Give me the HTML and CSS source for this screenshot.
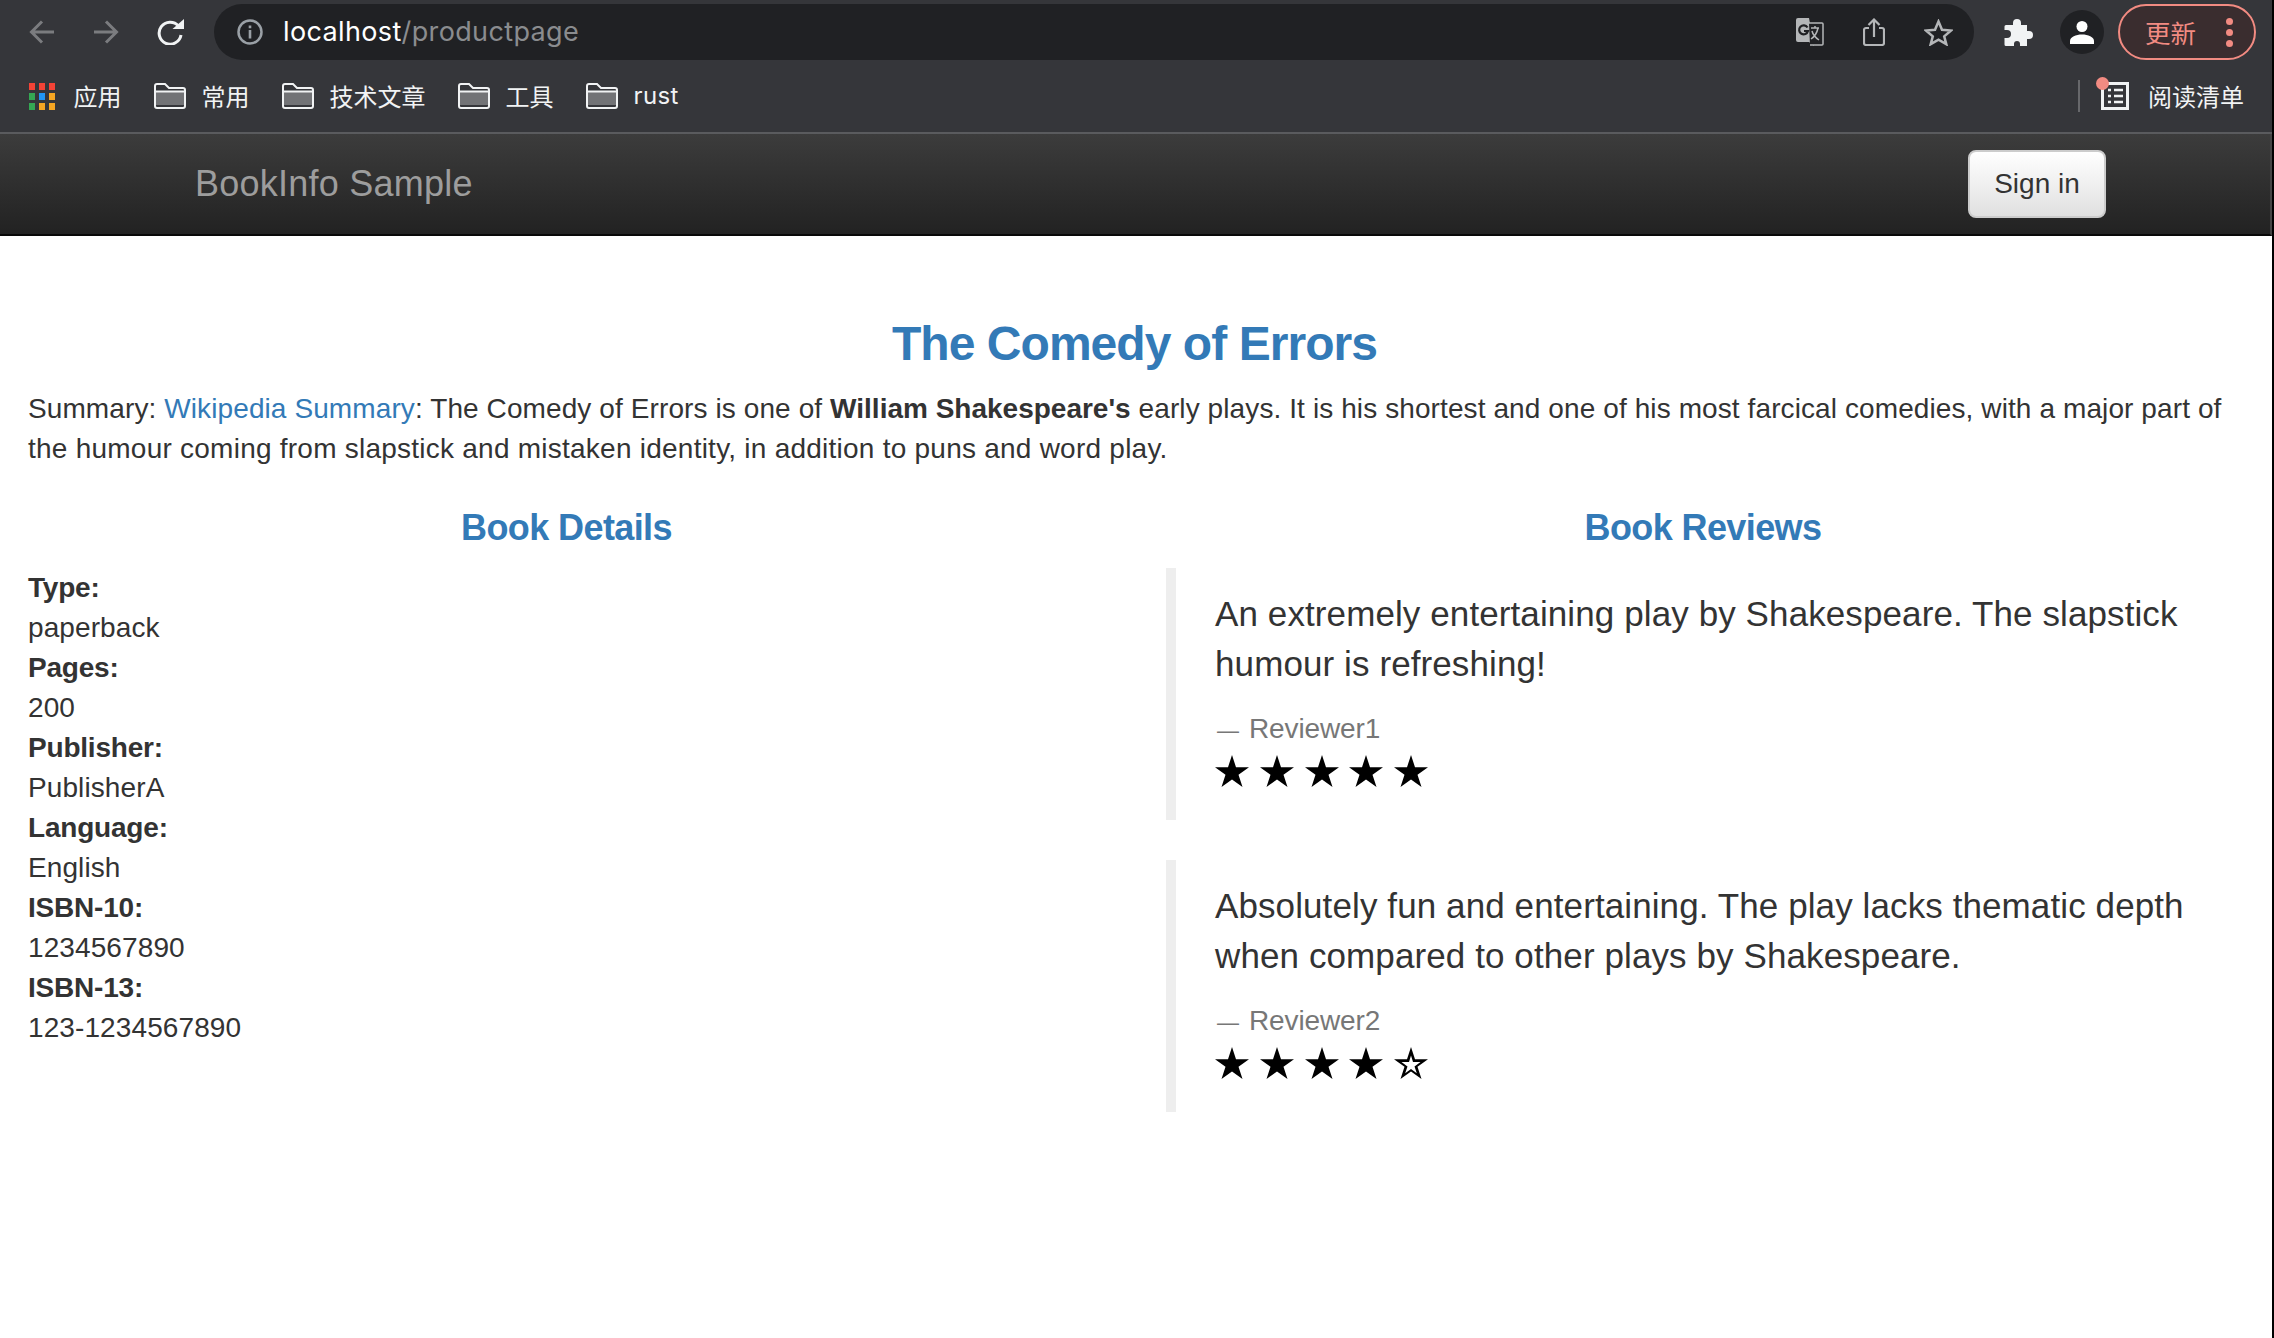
FILE: index.html
```html
<!DOCTYPE html>
<html lang="en">
<head>
    <meta charset="UTF-8">
    <meta name="viewport" content="width=device-width, initial-scale=1.0">
    <title>Simple Bookstore App</title>
    <link rel="stylesheet" href="styles.css">
</head>
<body>
    <svg class="defs" width="0" height="0">
        <defs>
            <symbol id="folder" viewBox="0 0 32 26">
                <path d="M2 9h28v13H2z" fill="#727376"/>
                <path d="M1 3a2 2 0 0 1 2-2h8l4 4h14a2 2 0 0 1 2 2v16a2 2 0 0 1-2 2H3a2 2 0 0 1-2-2zM1 8.500h30" fill="none" stroke="#f1f3f4" stroke-width="2"/>
            </symbol>
            <symbol id="star" viewBox="0 0 34 32">
                <polygon points="17,0 21,12.200 34,12.200 23.500,19.800 27.500,32 17,24.500 6.500,32 10.500,19.800 0,12.200 13,12.200"/>
            </symbol>
            <symbol id="star-empty" viewBox="0 0 34 32">
                <path fill-rule="evenodd" d="M17 0l4 12.200h13l-10.500 7.600 4 12.200L17 24.500 6.500 32l4-12.200L0 12.200h13zM17 8.500l-2 6.500H7.500l6 4.400-2.300 6.900 5.800-4.200 5.800 4.200-2.300-6.900 6-4.400H19z"/>
            </symbol>
        </defs>
    </svg>

    <div class="page">
        <!-- browser chrome -->
        <div class="toolbar">
            <svg class="nav-icon" viewBox="0 0 26 26"><path d="M25 13H3M13 2.500 2.500 13 13 23.500" fill="none" stroke="#7b7c7f" stroke-width="3"/></svg>
            <svg class="nav-icon" viewBox="0 0 26 26"><path d="M1 13h22M13 2.500 23.500 13 13 23.500" fill="none" stroke="#7b7c7f" stroke-width="3"/></svg>
            <svg class="nav-icon reload" viewBox="0 0 27 26"><path d="M21.500 7A11 11 0 1 0 24 16" fill="none" stroke="#f1f3f4" stroke-width="3"/><path d="M15.500 10 27 10V0z" fill="#f1f3f4"/></svg>

            <div class="omnibox">
                <svg class="info-icon" viewBox="0 0 26 26"><circle cx="13" cy="13" r="11.500" fill="none" stroke="#9aa0a6" stroke-width="2.500"/><path d="M11.700 6.500h2.600v2.800h-2.600zM11.700 11h2.600v8.500h-2.600z" fill="#9aa0a6"/></svg>
                <span class="url">localhost<span class="url-path">/productpage</span></span>
                <div class="omnibox-actions">
                    <svg class="translate-icon" viewBox="0 0 28 28">
                        <path d="M2 0h11l5 28-5-4H2a2 2 0 0 1-2-2V2a2 2 0 0 1 2-2z" fill="#b4b6b8"/>
                        <path d="M13 5h13a1 1 0 0 1 1 1v20a1 1 0 0 1-1 1H14" fill="#202124" stroke="#b4b6b8" stroke-width="1.500"/>
                        <path d="M11.500 9.500a4.500 4.500 0 1 0 .5 3.500H8" fill="none" stroke="#202124" stroke-width="2.200"/>
                        <path d="M15 10h8M19 8v2M22 10c-1 5-4 9-7 11M16 13c1 4 4 7 7 9" fill="none" stroke="#b4b6b8" stroke-width="1.500"/>
                    </svg>
                    <svg class="share-icon" viewBox="0 0 22 28"><path d="M6 10H3a2 2 0 0 0-2 2v13a2 2 0 0 0 2 2h16a2 2 0 0 0 2-2V12a2 2 0 0 0-2-2h-3M11 19V2M5.500 7 11 1.500 16.500 7" fill="none" stroke="#b4b6b8" stroke-width="2.200"/></svg>
                    <svg class="star-icon" viewBox="0 0 29 27"><polygon points="14.500,2.500 18,10.800 27,11.500 20.200,17.400 22.300,25.200 14.500,20.700 6.700,25.200 8.800,17.400 2,11.500 11,10.800" fill="none" stroke="#b4b6b8" stroke-width="2.500"/></svg>
                </div>
            </div>

            <svg class="puzzle-icon" viewBox="0 0 29 28"><path d="M2 7h7V5a4 4 0 0 1 8 0v2h6v6h2a4 4 0 0 1 0 8h-2v7H16v-2a3 3 0 0 0-6 0v2H2a1.500 1.500 0 0 1-1.500-1.500V20H3a4 4 0 0 0 0-8H.5V8.500A1.500 1.500 0 0 1 2 7z" fill="#f1f3f4"/></svg>
            <div class="profile">
                <svg viewBox="0 0 24 24" class="profile-icon"><circle cx="12" cy="6.500" r="5.500" fill="#fff"/><path d="M0 24v-3c0-4 6-6.500 12-6.500s12 2.500 12 6.500v3z" fill="#fff"/></svg>
            </div>
            <div class="update-btn">
                <span class="update-label">更新</span>
                <span class="dots"><i></i><i></i><i></i></span>
            </div>
        </div>

        <div class="bookmarks">
            <div class="bookmark">
                <div class="apps-grid">
                    <i class="red"></i><i class="red"></i><i class="red"></i>
                    <i class="green"></i><i class="blue"></i><i class="yellow"></i>
                    <i class="green"></i><i class="yellow"></i><i class="yellow"></i>
                </div>
                <span>应用</span>
            </div>
            <div class="bookmark"><svg class="folder"><use href="#folder"/></svg><span>常用</span></div>
            <div class="bookmark"><svg class="folder"><use href="#folder"/></svg><span>技术文章</span></div>
            <div class="bookmark"><svg class="folder"><use href="#folder"/></svg><span>工具</span></div>
            <div class="bookmark"><svg class="folder"><use href="#folder"/></svg><span class="latin">rust</span></div>

            <div class="reading-list">
                <div class="reading-icon">
                    <svg viewBox="0 0 28 28"><path d="M1.500 1.500h25v25h-25z" fill="none" stroke="#f1f3f4" stroke-width="3"/><path d="M7 8h3M13 8h9M7 14h3M13 14h9M7 20h3M13 20h9" fill="none" stroke="#f1f3f4" stroke-width="2.500"/></svg>
                    <span class="red-dot"></span>
                </div>
                <span>阅读清单</span>
            </div>
        </div>

        <!-- the page itself -->
        <nav class="navbar">
            <a class="navbar-brand" href="#">BookInfo Sample</a>
            <button class="btn-signin" type="button">Sign in</button>
        </nav>

        <main class="content">
            <h3 class="book-title">The Comedy of Errors</h3>
            <p class="summary">Summary: <a href="#">Wikipedia Summary</a>: The Comedy of Errors is one of <b>William Shakespeare's</b> early plays. It is his shortest and one of his most farcical comedies, with a major part of <span class="summary-end">the humour coming from slapstick and mistaken identity, in addition to puns and word play.</span></p>

            <div class="columns">
                <section>
                    <h4 class="col-title">Book Details</h4>
                    <dl class="details">
                        <dt>Type:</dt><dd>paperback</dd>
                        <dt>Pages:</dt><dd>200</dd>
                        <dt>Publisher:</dt><dd>PublisherA</dd>
                        <dt>Language:</dt><dd>English</dd>
                        <dt>ISBN-10:</dt><dd>1234567890</dd>
                        <dt>ISBN-13:</dt><dd>123-1234567890</dd>
                    </dl>
                </section>
                <section>
                    <h4 class="col-title">Book Reviews</h4>
                    <blockquote>
                        <p>An extremely entertaining play by Shakespeare. The slapstick humour is refreshing!</p>
                        <footer><span class="dash">—</span>Reviewer1</footer>
                        <div class="stars">
                            <svg><use href="#star"/></svg><svg><use href="#star"/></svg><svg><use href="#star"/></svg><svg><use href="#star"/></svg><svg><use href="#star"/></svg>
                        </div>
                    </blockquote>
                    <blockquote>
                        <p>Absolutely fun and entertaining. The play lacks thematic depth when compared to other plays by Shakespeare.</p>
                        <footer><span class="dash">—</span>Reviewer2</footer>
                        <div class="stars">
                            <svg><use href="#star"/></svg><svg><use href="#star"/></svg><svg><use href="#star"/></svg><svg><use href="#star"/></svg><svg><use href="#star-empty"/></svg>
                        </div>
                    </blockquote>
                </section>
            </div>
        </main>
    </div>
</body>
</html>
```

FILE: styles.css
```css
* {
    box-sizing: border-box;
}
html, body {
    height: 100%;
}
body {
    margin: 0;
    background-color: #000;
    font-family: "Liberation Sans", Arial, sans-serif;
    font-size: 28px;
    line-height: 40px;
    letter-spacing: 0.1px;
    color: #333;
    overflow: hidden;
}
.defs {
    position: absolute;
}
.page {
    width: 2272px;
    height: 100%;
    background-color: #fff;
}

/* browser chrome */
.toolbar {
    height: 66px;
    padding: 4px 16px 6px 29px;
    display: flex;
    align-items: center;
    background-color: #35363a;
}
.nav-icon {
    width: 26px;
    height: 26px;
    margin-right: 38px;
    flex: none;
}
.nav-icon.reload {
    width: 27px;
    margin-right: 30px;
}
.omnibox {
    flex: 1;
    height: 56px;
    padding: 0 21px 0 23px;
    display: flex;
    align-items: center;
    background-color: #202124;
    border-radius: 28px;
}
.info-icon {
    width: 26px;
    height: 26px;
    margin-right: 20px;
}
.url {
    font-family: Inter, "Liberation Sans", sans-serif;
    font-size: 27px;
    letter-spacing: 0.36px;
    color: #fff;
}
.url-path {
    color: #8a8c8f;
}
.omnibox-actions {
    margin-left: auto;
    display: flex;
    align-items: center;
    gap: 39px;
}
.translate-icon {
    width: 28px;
    height: 28px;
}
.share-icon {
    width: 22px;
    height: 28px;
}
.star-icon {
    width: 29px;
    height: 27px;
}
.puzzle-icon {
    width: 29px;
    height: 28px;
    margin: 0 27px 0 30px;
    flex: none;
}
.profile {
    width: 44px;
    height: 44px;
    margin-right: 14px;
    display: flex;
    align-items: center;
    justify-content: center;
    background-color: #202124;
    border-radius: 50%;
}
.profile-icon {
    width: 24px;
    height: 24px;
}
.update-btn {
    width: 138px;
    height: 56px;
    padding: 0 21px 0 25px;
    display: flex;
    align-items: center;
    justify-content: space-between;
    background-color: #3a2d2f;
    border: 2px solid #f28b82;
    border-radius: 28px;
}
.update-label {
    font-family: "Noto Sans CJK SC", sans-serif;
    font-size: 25.500px;
    letter-spacing: 0;
    color: #f28b82;
}
.dots {
    display: flex;
    flex-direction: column;
    gap: 4px;
}
.dots i {
    width: 7px;
    height: 7px;
    background-color: #f28b82;
    border-radius: 50%;
}

.bookmarks {
    height: 68px;
    padding: 0 28px 6px 29px;
    display: flex;
    align-items: center;
    gap: 32.500px;
    background-color: #35363a;
    border-bottom: 2px solid #5a5b5e;
    font-family: "Noto Sans CJK SC", sans-serif;
    font-size: 24px;
    letter-spacing: 0;
    color: #f1f3f4;
}
.bookmark {
    display: flex;
    align-items: center;
    gap: 15.500px;
}
.bookmark .latin {
    font-family: Inter, "Liberation Sans", sans-serif;
    font-size: 24px;
    letter-spacing: 0.4px;
}
.folder {
    width: 32px;
    height: 26px;
}
.apps-grid {
    width: 26px;
    height: 27px;
    margin-right: 3px;
    display: grid;
    grid-template-columns: repeat(3, 6px);
    grid-template-rows: repeat(3, 7px);
    justify-content: space-between;
    align-content: space-between;
}
.red { background-color: #f44336; }
.green { background-color: #34a853; }
.blue { background-color: #2196f3; }
.yellow { background-color: #f5a623; }
.reading-list {
    margin-left: auto;
    padding-left: 21px;
    display: flex;
    align-items: center;
    gap: 19px;
    border-left: 2px solid #67686b;
    height: 32px;
}
.reading-icon {
    position: relative;
    width: 28px;
    height: 28px;
}
.reading-icon svg {
    width: 28px;
    height: 28px;
    display: block;
}
.red-dot {
    position: absolute;
    left: -5px;
    top: -5px;
    width: 13px;
    height: 13px;
    background-color: #f28b82;
    border-radius: 50%;
}

/* bookinfo page */
.navbar {
    height: 102px;
    padding: 0 20px 0 195px;
    display: flex;
    align-items: center;
    justify-content: space-between;
    background-image: linear-gradient(to bottom, #3c3c3c, #222);
    border-bottom: 2px solid #080808;
    border-right: 2px solid #444;
}
.navbar-brand {
    font-size: 36px;
    letter-spacing: 0.24px;
    color: #9d9d9d;
    text-decoration: none;
}
.btn-signin {
    width: 138px;
    height: 68px;
    margin-right: 144px;
    padding: 0;
    font-family: inherit;
    font-size: 28px;
    color: #333;
    background-image: linear-gradient(to bottom, #fff, #e0e0e0);
    border: 2px solid #ccc;
    border-radius: 8px;
}
.content {
    padding: 81px 34px 0 28px;
}
.book-title {
    margin: 0 0 18px;
    padding-left: 3px;
    font-size: 48px;
    line-height: 53px;
    letter-spacing: -0.95px;
    font-weight: bold;
    text-align: center;
    color: #337ab7;
}
.summary {
    margin: 0;
    padding-top: 1px;
    margin-bottom: -1px;
}
.summary a {
    color: #337ab7;
    text-decoration: none;
}
.summary b {
    letter-spacing: 0;
}
.summary-end {
    letter-spacing: 0.24px;
}
.columns {
    margin-top: 40px;
    display: grid;
    grid-template-columns: 1077px 1074px;
    column-gap: 61px;
}
.col-title {
    margin: 0 0 20px;
    font-size: 36px;
    line-height: 40px;
    letter-spacing: -0.6px;
    font-weight: bold;
    text-align: center;
    color: #337ab7;
}
.details {
    margin: 1px 0 0;
}
.details dt {
    font-weight: bold;
    letter-spacing: -0.2px;
}
.details dd {
    margin: 0;
}
blockquote {
    margin: 0 0 40px;
    padding: 21px 40px 19px 39px;
    border-left: 10px solid #eee;
    font-size: 35px;
    line-height: 50px;
    letter-spacing: 0.1px;
}
blockquote p {
    margin: 0 0 20px;
}
blockquote footer {
    font-size: 28px;
    line-height: 40px;
    letter-spacing: -0.1px;
    color: #777;
}
.dash {
    margin: 0 10px 0 2px;
    font-size: 22px;
}
.stars {
    height: 50px;
    padding-top: 4px;
    display: flex;
    gap: 10.800px;
}
.stars svg {
    width: 34px;
    height: 32px;
}
```
